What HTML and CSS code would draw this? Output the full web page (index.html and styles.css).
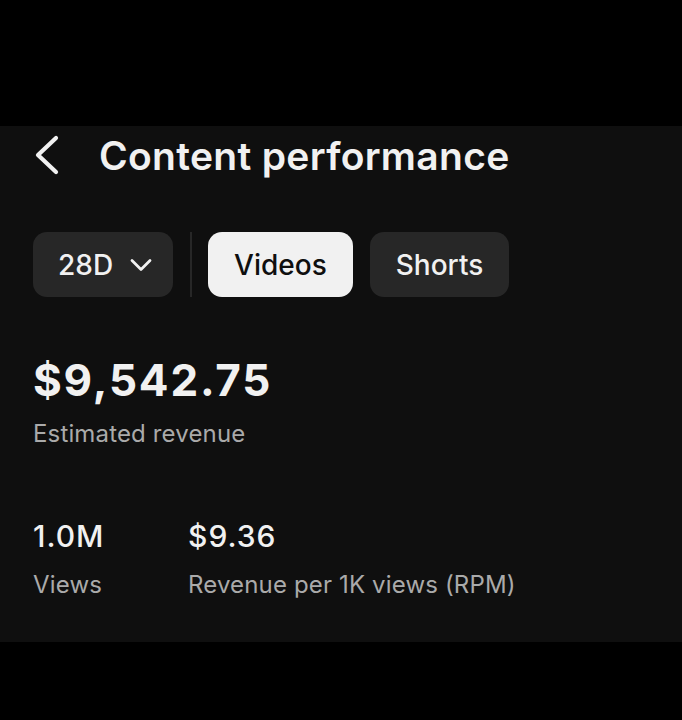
FILE: index.html
```html
<!DOCTYPE html>
<html lang="en">
<head>
  <meta charset="UTF-8" />
  <meta name="viewport" content="width=device-width, initial-scale=1.0"/>
  <title>Content performance</title>
  <link rel="stylesheet" href="styles.css">
</head>
<body>

<div class="screen">
  <!-- Header -->
  <div class="header">
    <span class="back-icon">
      <svg width="26" height="40" viewBox="0 0 26 40">
        <path d="M22 3 L4 20 L22 37" fill="none" stroke="#f1f1f1" stroke-width="4.2" stroke-linecap="round" stroke-linejoin="round"/>
      </svg>
    </span>
    <h1>Content performance</h1>
  </div>

  <!-- Filter chips -->
  <div class="chips">
    <div class="chip dropdown">
      28D
      <svg class="chevron" width="22" height="14" viewBox="0 0 22 14">
        <path d="M2 2.5 L11 11.5 L20 2.5" fill="none" stroke="#f1f1f1" stroke-width="2.8" stroke-linecap="round" stroke-linejoin="round"/>
      </svg>
    </div>
    <div class="divider"></div>
    <div class="chip active">Videos</div>
    <div class="chip">Shorts</div>
  </div>

  <!-- Main metric -->
  <div class="metric-main">
    <div class="big-value">$9,542.75</div>
    <div class="label">Estimated revenue</div>
  </div>

  <!-- Secondary metrics -->
  <div class="metric-row">
    <div class="metric views">
      <div class="value">1.0M</div>
      <div class="label">Views</div>
    </div>
    <div class="metric">
      <div class="value">$9.36</div>
      <div class="label">Revenue per 1K views (RPM)</div>
    </div>
  </div>
</div>

</body>
</html>
```

FILE: styles.css
```css
/* Global styles */
body {
  margin: 0;
  font-family: Inter, "Liberation Sans", Arial, sans-serif;
  background-color: #000;
  color: #f1f1f1;
}

.screen {
  margin-top: 126px;
  height: 516px;
  background-color: #0f0f0f;
  padding: 0 33px;
  box-sizing: border-box;
  overflow: hidden;
}

.header {
  display: flex;
  align-items: center;
  height: 58px;
}

.back-icon {
  display: flex;
  width: 65px;
  margin-left: 1px;
}

h1 {
  margin: 0;
  font-size: 39px;
  font-weight: 600;
  letter-spacing: 0.3px;
}

/* Chips */
.chips {
  display: flex;
  align-items: center;
  margin-top: 48px;
  height: 65px;
}

.chip {
  height: 65px;
  box-sizing: border-box;
  padding: 0 26px;
  border-radius: 14px;
  background-color: #272727;
  display: flex;
  align-items: center;
  font-size: 28px;
  font-weight: 500;
  margin-right: 17px;
}

.chip.dropdown {
  padding: 0 21px 0 25px;
}

.chip .chevron {
  margin-left: 17px;
}

.chip.active {
  background-color: #f1f1f1;
  color: #0f0f0f;
}

.divider {
  width: 2px;
  height: 65px;
  background-color: #272727;
  margin-right: 16px;
}

/* Metrics */
.metric-main {
  margin-top: 57px;
}

.big-value {
  font-size: 44px;
  font-weight: 700;
  line-height: 52px;
  letter-spacing: 1.8px;
}

.label {
  font-size: 24px;
  color: #aaa;
  margin-top: 13px;
  letter-spacing: 0.15px;
}

.metric-row {
  display: flex;
  margin-top: 69px;
}

.metric.views {
  width: 155px;
}

.value {
  font-size: 30px;
  font-weight: 500;
  line-height: 38px;
  letter-spacing: 1px;
}

.metric .label {
  margin-top: 15px;
}
```
